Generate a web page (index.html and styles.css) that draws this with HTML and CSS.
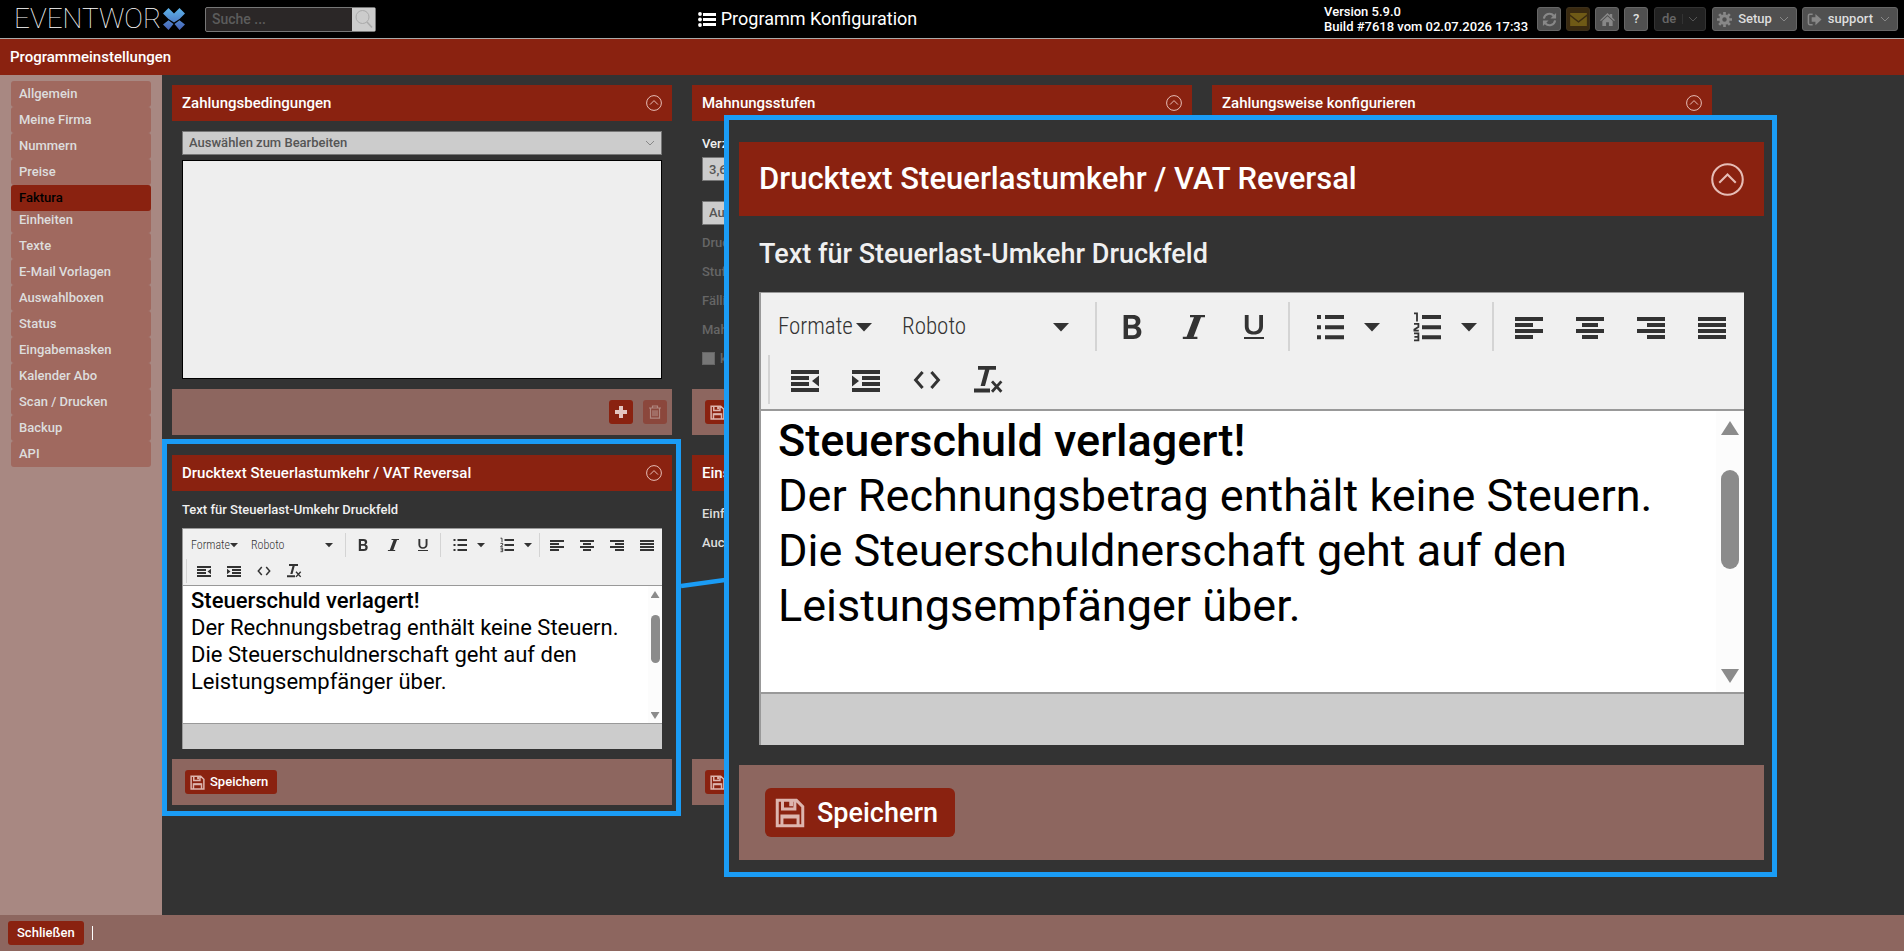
FILE: index.html
```html
<!DOCTYPE html>
<html lang="de">
<head>
<meta charset="utf-8">
<title>Programm Konfiguration</title>
<link rel="stylesheet" href="styles.css">
</head>
<body>
<svg class="sprite" aria-hidden="true">
  <defs>
    <linearGradient id="logo-fill" x1="0" y1="0" x2="0" y2="1"><stop offset="0" stop-color="#5db4ea"/><stop offset="1" stop-color="#4660b4"/></linearGradient>
  </defs>
  <symbol id="i-collapse" viewBox="0 0 16 16"><circle cx="8" cy="8" r="7.4" fill="none" stroke="currentColor" stroke-width="1"/><path d="M4 9.6 8 5.6l4 4" fill="none" stroke="currentColor" stroke-width="1"/></symbol>
  <symbol id="i-chevron" viewBox="0 0 10 10"><path d="M1 3l4 4 4-4" fill="none" stroke="currentColor"/></symbol>
  <symbol id="i-caret" viewBox="0 0 8 8"><path d="M0 2h8L4 6.300z"/></symbol>
  <symbol id="i-bold" viewBox="0 0 16 16"><path fill-rule="evenodd" d="M3.800 2h4.700c2.400 0 3.700 1.200 3.700 3.100 0 1.200-.6 2.100-1.600 2.500 1.300.4 2.100 1.400 2.100 2.800 0 2.200-1.500 3.600-4 3.600H3.800zM6 3.900v3h2.200c1.100 0 1.700-.5 1.700-1.500s-.6-1.500-1.700-1.500zM6 8.700v3.400h2.500c1.200 0 1.900-.6 1.900-1.700s-.7-1.700-1.900-1.700z"/></symbol>
  <symbol id="i-italic" viewBox="0 0 16 16"><path d="M6.500 2H14v1.100h-2L8.300 12.900h1.900V14H2.900v-1.100h1.900L8.500 3.100h-2z"/></symbol>
  <symbol id="i-underline" viewBox="0 0 16 16"><path d="M3.400 2h1.900v5.500c0 1.700.9 2.700 2.600 2.700s2.700-1 2.700-2.700V2h1.900v5.600c0 2.700-1.700 4.200-4.600 4.200S3.400 10.300 3.400 7.600zM3 13h10v1H3z"/></symbol>
  <symbol id="i-bullets" viewBox="0 0 16 16"><path d="M5.500 2H15v2H5.500zM5.500 7.100H15v2H5.500zM5.500 12.100H15v2H5.500zM1.500 2h2v2h-2zM1.500 7.100h2v2h-2zM1.500 12.100h2v2h-2z"/></symbol>
  <symbol id="i-numbers" viewBox="0 0 16 16"><path d="M5.500 2H15v2H5.500zM5.500 7.100H15v2H5.500zM5.500 12.100H15v2H5.500z"/><path d="M1.500 1.200h1.500v4M1.500 6.400h2.200v1.600L1.700 9.300v.5h2.200M1.500 11.200h2.200v3.500H1.500M1.700 12.900h2" fill="none" stroke="currentColor" stroke-width=".9"/></symbol>
  <symbol id="i-left" viewBox="0 0 16 16"><path d="M1 3h14v2H1zM1 6h9v2H1zM1 9h14v2H1zM1 12h9v2H1z"/></symbol>
  <symbol id="i-center" viewBox="0 0 16 16"><path d="M1 3h14v2H1zM4 6h8v2H4zM1 9h14v2H1zM4 12h8v2H4z"/></symbol>
  <symbol id="i-right" viewBox="0 0 16 16"><path d="M1 3h14v2H1zM6 6h9v2H6zM1 9h14v2H1zM6 12h9v2H6z"/></symbol>
  <symbol id="i-justify" viewBox="0 0 16 16"><path d="M1 3h14v2H1zM1 6h14v2H1zM1 9h14v2H1zM1 12h14v2H1z"/></symbol>
  <symbol id="i-outdent" viewBox="0 0 16 16"><path d="M1 3h14v2H1zM1 6h9v2H1zM1 9h9v2H1zM1 12h14v2H1zM15 5.800v5.400L11.500 8.500z"/></symbol>
  <symbol id="i-indent" viewBox="0 0 16 16"><path d="M1 3h14v2H1zM6 6h9v2H6zM6 9h9v2H6zM1 12h14v2H1zM1 5.800v5.400l3.500-2.700z"/></symbol>
  <symbol id="i-code" viewBox="0 0 16 16"><path d="M5.800 4 2.300 8l3.500 4M10.200 4l3.500 4-3.500 4" fill="none" stroke="currentColor" stroke-width="1.500"/></symbol>
  <symbol id="i-clear" viewBox="0 0 16 16"><path d="M3 1h9v1.900H8.700L6.500 11H4.300l2.200-8.100H3zM1 12.300h8v1.900H1z"/><path d="M10 8.700l4.700 5.200M14.700 8.700 10 13.900" fill="none" stroke="currentColor" stroke-width="1.400"/></symbol>
  <symbol id="i-save" viewBox="0 0 16 16"><path d="M1.200 1.200h10.200l3.400 3.400v10.200H1.200zM4 1.200v4.600h6.600V1.200M3.700 14.800V9.600h8.600v5.200" fill="none" stroke="currentColor" stroke-width="1.600"/><path d="M7.600 1.200h2v3.200h-2zM3.700 9h8.600v1.900H3.700z"/></symbol>
  <symbol id="i-plus" viewBox="0 0 16 16"><path d="M6 2h4v4h4v4h-4v4H6v-4H2V6h4z"/></symbol>
  <symbol id="i-trash" viewBox="0 0 16 16"><path d="M2 4h12M5.500 4V2h5v2M3.500 4v10.200h9V4M6 6.200v6M8 6.200v6M10 6.200v6" fill="none" stroke="currentColor" stroke-width="1.200"/></symbol>
  <symbol id="i-list" viewBox="0 0 18 18"><path d="M5 3h13v3H5zM5 8h13v3H5zM5 13h13v3H5z"/><circle cx="2" cy="4" r="1.900"/><circle cx="2" cy="9.500" r="1.900"/><circle cx="2" cy="15" r="1.900"/></symbol>
  <symbol id="i-search" viewBox="0 0 20 20"><circle cx="8.500" cy="8" r="6.500" fill="none" stroke="currentColor"/><path d="M13 13l5 5.500" fill="none" stroke="currentColor" stroke-width="1.500"/></symbol>
  <symbol id="i-refresh" viewBox="0 0 16 16"><path d="M2 7a6 6 0 0 1 10.500-3M14 9a6 6 0 0 1-10.500 3" fill="none" stroke="currentColor" stroke-width="2.200"/><path d="M15 1v6H9zM1 15V9h6z"/></symbol>
  <symbol id="i-mail" viewBox="0 0 18 14"><path d="M0 0h18v1.500L9 8.500 0 1.500zM0 3.500l9 7 9-7V14H0z"/></symbol>
  <symbol id="i-home" viewBox="0 0 16 16"><path d="M8 1l2.500 2.400V2H13v3.800l3 2.900-1 1L8 3.200 1 9.700l-1-1zM8 4.500l5.500 5.200V15H9.500v-4h-3v4h-4V9.700z"/></symbol>
  <symbol id="i-gear" viewBox="0 0 16 16"><circle cx="8" cy="8" r="4" fill="none" stroke="currentColor" stroke-width="3.200"/><path d="M8 0v3M8 13v3M0 8h3M13 8h3M2.300 2.300l2.200 2.200M11.500 11.500l2.200 2.200M2.300 13.700l2.200-2.200M11.500 4.500l2.200-2.200" fill="none" stroke="currentColor" stroke-width="2.800"/></symbol>
  <symbol id="i-exit" viewBox="0 0 16 16"><path d="M6 2.500H3a1.500 1.500 0 0 0-1.500 1.500v8A1.500 1.500 0 0 0 3 13.500h3" fill="none" stroke="currentColor" stroke-width="1.600"/><path d="M5 5.500h4V2l6.500 6L9 14v-3.500H5z"/></symbol>
</svg>

<header class="topbar">
  <a class="logo" href="#" aria-label="EVENTWORX">EVENTWOR<svg class="logo-x" viewBox="0 0 22 22" aria-hidden="true"><path fill="url(#logo-fill)" d="M5.500 0 11 5.500 16.500 0 22 5.500 16.500 11 11 14.500 5.500 11 0 5.500zM5.500 12.200l5 3.800-5 6L0 16.500zM16.500 12.200l5.500 4.300-5.500 5.500-5-6z"/></svg></a>
  <form class="search">
    <input type="text" placeholder="Suche ..." aria-label="Suche">
    <button type="button" aria-label="Suchen"><svg><use href="#i-search"/></svg></button>
  </form>
  <h1 class="page-title"><svg><use href="#i-list"/></svg>Programm Konfiguration</h1>
  <p class="version">Version 5.9.0<br>Build #7618 vom 02.07.2026 17:33</p>
  <nav class="tools">
    <button class="tool" aria-label="Aktualisieren"><svg><use href="#i-refresh"/></svg></button>
    <button class="tool tool-mail" aria-label="Nachrichten"><svg><use href="#i-mail"/></svg></button>
    <button class="tool" aria-label="Startseite"><svg><use href="#i-home"/></svg></button>
    <button class="tool">?</button>
    <button class="tool tool-lang">de<svg class="chev"><use href="#i-chevron"/></svg></button>
    <button class="tool tool-wide"><svg><use href="#i-gear"/></svg>Setup<svg class="chev"><use href="#i-chevron"/></svg></button>
    <button class="tool tool-wide"><svg><use href="#i-exit"/></svg>support<svg class="chev"><use href="#i-chevron"/></svg></button>
  </nav>
</header>
<h2 class="section-bar">Programmeinstellungen</h2>

<div class="workspace">
  <nav class="sidebar">
    <a href="#">Allgemein</a>
    <a href="#">Meine Firma</a>
    <a href="#">Nummern</a>
    <a href="#">Preise</a>
    <a href="#" class="active">Faktura</a>
    <a href="#">Einheiten</a>
    <a href="#">Texte</a>
    <a href="#">E-Mail Vorlagen</a>
    <a href="#">Auswahlboxen</a>
    <a href="#">Status</a>
    <a href="#">Eingabemasken</a>
    <a href="#">Kalender Abo</a>
    <a href="#">Scan / Drucken</a>
    <a href="#">Backup</a>
    <a href="#">API</a>
  </nav>

  <main class="panels">
    <section class="panel">
      <h3 class="panel-head">Zahlungsbedingungen<svg><use href="#i-collapse"/></svg></h3>
      <div class="panel-body">
        <div class="select"><select aria-label="Zahlungsbedingung"><option>Auswählen zum Bearbeiten</option></select><svg><use href="#i-chevron"/></svg></div>
        <textarea class="blank" aria-label="Zahlungsbedingung Text"></textarea>
      </div>
      <div class="panel-foot foot-end">
        <button class="btn btn-icon" aria-label="Hinzufügen"><svg><use href="#i-plus"/></svg></button>
        <button class="btn btn-icon" disabled aria-label="Löschen"><svg><use href="#i-trash"/></svg></button>
      </div>
    </section>

    <section class="panel">
      <h3 class="panel-head">Mahnungsstufen<svg><use href="#i-collapse"/></svg></h3>
      <div class="panel-body">
        <label class="label field-label" for="rate">Verzug</label>
        <input class="field" id="rate" type="text" value="3,6">
        <div class="select level"><select aria-label="Mahnstufe"><option>Auswahl</option></select><svg><use href="#i-chevron"/></svg></div>
        <p class="hint">Druck</p>
        <p class="hint">Stufe</p>
        <p class="hint">Fällig</p>
        <p class="hint">Mahn</p>
        <label class="hint check"><input type="checkbox" disabled>kein</label>
      </div>
      <div class="panel-foot"><button class="btn" aria-label="Speichern"><svg><use href="#i-save"/></svg></button></div>
    </section>

    <section class="panel">
      <h3 class="panel-head">Zahlungsweise konfigurieren<svg><use href="#i-collapse"/></svg></h3>
    </section>

    <section class="panel">
      <h3 class="panel-head">Drucktext Steuerlastumkehr / VAT Reversal<svg><use href="#i-collapse"/></svg></h3>
      <div class="panel-body">
        <p class="label">Text für Steuerlast-Umkehr Druckfeld</p>
        <div class="editor">
          <div class="toolbar">
            <div class="tb-row">
              <button class="tb-format">Formate<svg><use href="#i-caret"/></svg></button>
              <div class="tb-font"><select aria-label="Schriftart"><option>Roboto</option></select><svg><use href="#i-caret"/></svg></div>
              <i class="tb-sep"></i>
              <button class="tb" aria-label="Fett"><svg><use href="#i-bold"/></svg></button>
              <button class="tb" aria-label="Kursiv"><svg><use href="#i-italic"/></svg></button>
              <button class="tb" aria-label="Unterstrichen"><svg><use href="#i-underline"/></svg></button>
              <i class="tb-sep"></i>
              <button class="tb-split" aria-label="Aufzählung"><svg><use href="#i-bullets"/></svg><svg class="caret"><use href="#i-caret"/></svg></button>
              <button class="tb-split" aria-label="Nummerierung"><svg><use href="#i-numbers"/></svg><svg class="caret"><use href="#i-caret"/></svg></button>
              <i class="tb-sep"></i>
              <button class="tb" aria-label="Linksbündig"><svg><use href="#i-left"/></svg></button>
              <button class="tb" aria-label="Zentriert"><svg><use href="#i-center"/></svg></button>
              <button class="tb" aria-label="Rechtsbündig"><svg><use href="#i-right"/></svg></button>
              <button class="tb" aria-label="Blocksatz"><svg><use href="#i-justify"/></svg></button>
            </div>
            <div class="tb-row">
              <i class="tb-sep"></i>
              <button class="tb" aria-label="Einzug verkleinern"><svg><use href="#i-outdent"/></svg></button>
              <button class="tb" aria-label="Einzug vergrößern"><svg><use href="#i-indent"/></svg></button>
              <button class="tb" aria-label="Quelltext"><svg><use href="#i-code"/></svg></button>
              <button class="tb" aria-label="Formatierung entfernen"><svg><use href="#i-clear"/></svg></button>
            </div>
          </div>
          <div class="editor-page">
            <div class="editor-text"><strong>Steuerschuld verlagert!</strong><br>Der Rechnungsbetrag enthält keine Steuern.<br>Die Steuerschuldnerschaft geht auf den Leistungsempfänger über.</div>
            <div class="scroll"><i class="up"></i><i class="thumb"></i><i class="down"></i></div>
          </div>
          <div class="status"></div>
        </div>
      </div>
      <div class="panel-foot"><button class="btn"><svg><use href="#i-save"/></svg>Speichern</button></div>
    </section>

    <section class="panel">
      <h3 class="panel-head">Einst<svg><use href="#i-collapse"/></svg></h3>
      <div class="panel-body options">
        <p>Einfach</p>
        <p>Auch</p>
      </div>
      <div class="panel-foot"><button class="btn" aria-label="Speichern"><svg><use href="#i-save"/></svg></button></div>
    </section>
  </main>

  <div class="marker"></div>
  <svg class="connector" viewBox="0 0 44 14" aria-hidden="true"><path d="M0 10 44 4" stroke="#1a9cf5" stroke-width="4.500"/></svg>

  <section class="lens">
    <h3 class="panel-head">Drucktext Steuerlastumkehr / VAT Reversal<svg><use href="#i-collapse"/></svg></h3>
    <div class="panel-body">
      <p class="label">Text für Steuerlast-Umkehr Druckfeld</p>
      <div class="editor">
        <div class="toolbar">
          <div class="tb-row">
            <button class="tb-format">Formate<svg><use href="#i-caret"/></svg></button>
            <div class="tb-font"><select aria-label="Schriftart"><option>Roboto</option></select><svg><use href="#i-caret"/></svg></div>
            <i class="tb-sep"></i>
            <button class="tb" aria-label="Fett"><svg><use href="#i-bold"/></svg></button>
            <button class="tb" aria-label="Kursiv"><svg><use href="#i-italic"/></svg></button>
            <button class="tb" aria-label="Unterstrichen"><svg><use href="#i-underline"/></svg></button>
            <i class="tb-sep"></i>
            <button class="tb-split" aria-label="Aufzählung"><svg><use href="#i-bullets"/></svg><svg class="caret"><use href="#i-caret"/></svg></button>
            <button class="tb-split" aria-label="Nummerierung"><svg><use href="#i-numbers"/></svg><svg class="caret"><use href="#i-caret"/></svg></button>
            <i class="tb-sep"></i>
            <button class="tb" aria-label="Linksbündig"><svg><use href="#i-left"/></svg></button>
            <button class="tb" aria-label="Zentriert"><svg><use href="#i-center"/></svg></button>
            <button class="tb" aria-label="Rechtsbündig"><svg><use href="#i-right"/></svg></button>
            <button class="tb" aria-label="Blocksatz"><svg><use href="#i-justify"/></svg></button>
          </div>
          <div class="tb-row">
            <i class="tb-sep"></i>
            <button class="tb" aria-label="Einzug verkleinern"><svg><use href="#i-outdent"/></svg></button>
            <button class="tb" aria-label="Einzug vergrößern"><svg><use href="#i-indent"/></svg></button>
            <button class="tb" aria-label="Quelltext"><svg><use href="#i-code"/></svg></button>
            <button class="tb" aria-label="Formatierung entfernen"><svg><use href="#i-clear"/></svg></button>
          </div>
        </div>
        <div class="editor-page">
          <div class="editor-text"><strong>Steuerschuld verlagert!</strong><br>Der Rechnungsbetrag enthält keine Steuern.<br>Die Steuerschuldnerschaft geht auf den Leistungsempfänger über.</div>
          <div class="scroll"><i class="up"></i><i class="thumb"></i><i class="down"></i></div>
        </div>
        <div class="status"></div>
      </div>
    </div>
    <div class="panel-foot"><button class="btn"><svg><use href="#i-save"/></svg>Speichern</button></div>
  </section>
</div>

<footer class="bottombar"><button class="btn">Schließen</button><i class="bar"></i></footer>
</body>
</html>
```
FILE: styles.css
```css
* { box-sizing: border-box; }

body {
  margin: 0;
  min-height: 100vh;
  display: flex;
  flex-direction: column;
  background: #333;
  color: #fff;
  font: 500 13px/16px Roboto, "Liberation Sans", sans-serif;
}

h1, h2, h3, p { margin: 0; font: inherit; }
svg { display: block; fill: currentColor; flex: none; }
.sprite { position: absolute; width: 0; height: 0; }
button, input, select, textarea { font: inherit; color: inherit; margin: 0; }
button { border: 0; padding: 0; background: none; display: flex; align-items: center; justify-content: center; }
select { appearance: none; border: 0; border-radius: 0; outline: 0; background: none; }

/* top bar */
.topbar {
  height: 39px;
  background: #000;
  border-bottom: 1px solid #aaa;
  display: flex;
  align-items: center;
  padding: 0 6px 0 14px;
}
.logo { display: flex; align-items: center; gap: 2px; width: 191px; color: #fff; text-decoration: none; font-size: 28px; font-weight: 100; }
.logo-x { width: 22px; height: 22px; }
.search { display: flex; width: 171px; height: 25px; border: 1px solid #777; border-radius: 2px; background: #2b2727; }
.search input { flex: 1; min-width: 0; border: 0; background: none; padding: 0 6px; font-size: 14px; }
.search input::placeholder { color: #5c5c5c; }
.search button { width: 23px; background: #ccc; color: #aaa; }
.search button svg { width: 20px; height: 20px; }
.page-title { flex: 1; display: flex; align-items: center; justify-content: center; gap: 5px; padding-right: 85px; font-size: 18px; font-weight: 400; line-height: 22px; }
.page-title svg { width: 18px; height: 18px; }
.version { line-height: 15px; margin-right: 9px; }
.tools { display: flex; gap: 5px; }
.tool { height: 24px; min-width: 24px; border: 1px solid #666; border-radius: 3px; background: #505050; color: #ddd; gap: 6px; }
.tool svg { width: 15px; height: 15px; color: #888; }
.tool .chev { width: 10px; height: 10px; }
.tool-mail { background: #3a2a10; border-color: #3c301c; }
.tool-mail svg { color: #6f5a16; height: 13px; width: 17px; }
.tool-lang { width: 52px; margin-left: 1px; background: #222; border-color: #333; color: #666; }
.tool-lang .chev { box-sizing: content-box; padding-left: 5px; border-left: 1px solid #333; color: #555; }
.tool-wide { padding: 0 7px 0 4px; gap: 6px; }
.tool-wide .chev { margin-left: 1px; }
.tool-lang + .tool-wide { margin-left: 1px; }

.section-bar { height: 36px; padding: 0 10px; background: #8a2210; font-size: 15px; line-height: 36px; }

/* work area */
.workspace { flex: 1; display: flex; position: relative; }
.sidebar { width: 162px; padding: 6px 11px; background: #a88882; }
.sidebar a { display: block; height: 26px; padding: 0 8px; border-radius: 3px; background: #a0695f; color: #ddd; line-height: 26px; text-decoration: none; }
.sidebar .active { position: relative; margin-bottom: -4px; background: #8a2210; color: #000; }

.panels { flex: 1; display: grid; grid-template-columns: repeat(3, 500px); gap: 20px; align-content: start; padding: 10px; }
.panel { display: flex; flex-direction: column; }
.panel-head { display: flex; align-items: center; justify-content: space-between; height: 36px; padding: 0 10px; background: #8a2210; font-size: 15px; }
.panel-head svg { width: 16px; height: 16px; color: #e6bdb6; }
.panel-body { flex: 1; padding: 10px; }
.panel-foot { display: flex; align-items: center; gap: 10px; height: 46px; padding: 0 13px; background: #8d665f; }
.foot-end { justify-content: flex-end; padding: 0 5px; }

.btn { height: 24px; padding: 0 9px 0 5px; gap: 5px; border-radius: 3px; background: #8a2210; color: #fff; }
.btn svg { width: 15px; height: 15px; color: #ddb5ae; }
.btn-icon { width: 24px; padding: 0; }
.btn-icon svg { width: 16px; height: 16px; color: #e3c5c0; }
.btn:disabled { background: #8b473c; }
.btn:disabled svg { color: #b08880; }

.select { display: grid; align-items: center; height: 24px; border: 1px solid #777; background: #ccc; color: #555; }
.select > * { grid-area: 1 / 1; }
.select select { width: 100%; padding: 0 6px; }
.select svg { width: 10px; height: 10px; justify-self: end; margin-right: 6px; color: #888; }
.blank { display: block; width: 100%; height: 219px; margin-top: 5px; border: 1px solid #000; background: #eee; resize: none; }
.label { display: block; color: #f0f0f0; line-height: 18px; }
.field-label { padding: 4px 0; }
.field { display: block; width: 100%; height: 24px; border: 1px solid #777; background: #ccc; color: #555; padding: 0 6px; }
.level { margin: 20px 0 3px; }
.hint { color: #666; line-height: 29px; }
.check { display: flex; align-items: center; gap: 5px; }
.check input { appearance: none; width: 13px; height: 13px; background: #777; border: 1px solid #666; }
.options { padding-top: 8px; color: #ddd; line-height: 29px; }

/* rich text editor */
.editor { margin-top: 9px; border: solid #999; border-width: 1px 0 0 1px; background: #fff; }
.toolbar { display: flex; flex-direction: column; gap: 2px; padding: 4px 0 2px; background: #f0f0f0; border-bottom: 1px solid #999; color: #333; }
.tb-row { display: flex; height: 24px; }
.tb { width: 30px; }
.tb svg, .tb-split svg { width: 16px; height: 16px; }
.tb-sep { width: 1px; margin: 0 2px; background: #d4d4d4; }
.tb-sep:first-child { margin-left: 3px; }
.tb-format, .tb-font { font: 300 12px/24px "Roboto Condensed", "Liberation Sans Narrow", Roboto, sans-serif; color: #333; }
.tb-format { width: 58px; padding: 0 4px 0 8px; justify-content: space-between; }
.tb-font { display: grid; align-items: center; width: 102px; padding: 0 10px; }
.tb-font > * { grid-area: 1 / 1; }
.tb-font select { width: 100%; padding: 0; }
.tb-font svg { justify-self: end; }
.tb-format svg, .tb-font svg, .tb-split .caret { width: 8px; height: 8px; color: #333; }
.tb-split { width: 47px; justify-content: flex-start; padding-left: 9px; gap: 9px; }
.editor-page { display: flex; height: 138px; border-bottom: 1px solid #999; color: #000; overflow: hidden; }
.editor-text { flex: 1; padding: 1px 8px; font-size: 22px; line-height: 27px; font-weight: 400; }
.editor-text strong { font-weight: 500; }
.scroll { width: 14px; display: flex; flex-direction: column; align-items: center; padding: 5px 0 4px; background: #fcfcfc; }
.thumb { width: 9px; height: 48px; margin: 17px 0 auto; border-radius: 5px; background: #8b8b8b; }
.up, .down { width: 9px; height: 7px; background: #8b8b8b; }
.up { clip-path: polygon(50% 0, 100% 100%, 0 100%); }
.down { clip-path: polygon(0 0, 100% 0, 50% 100%); }
.status { height: 25px; background: #ccc; }

/* highlight frame, connector and enlarged view */
.marker { position: absolute; left: 162px; top: 364px; width: 519px; height: 377px; border: 5px solid #1a9cf5; }
.connector { position: absolute; left: 681px; top: 501px; width: 44px; height: 14px; }
.lens { position: absolute; left: 724px; top: 40px; width: 1053px; padding: 22px 8px 12px 10px; border: 5px solid #1a9cf5; background: #333; }
.lens .panel-head { height: 74px; padding: 0 20px; font-size: 31px; line-height: 36px; }
.lens .panel-head svg { width: 33px; height: 33px; }
.lens .panel-body { padding: 20px; }
.lens .label { font-size: 27px; line-height: 36px; }
.lens .panel-foot { height: 95px; padding: 0 26px; }
.lens .btn { height: 49px; padding: 0 17px 0 10px; gap: 12px; border-radius: 6px; font-size: 27px; line-height: 32px; }
.lens .btn svg { width: 30px; height: 30px; }
.lens .editor { margin-top: 20px; border-width: 1px 0 0 2px; }
.lens .toolbar { gap: 4px; padding: 9px 0 5px; border-bottom-width: 2px; }
.lens .tb-row { height: 49px; }
.lens .tb { width: 61px; }
.lens .tb svg, .lens .tb-split svg { width: 32px; height: 32px; }
.lens .tb-sep { width: 2px; margin: 0 4px; }
.lens .tb-sep:first-child { margin-left: 7px; }
.lens .tb-format, .lens .tb-font { font-size: 23px; line-height: 48px; }
.lens .tb-format { width: 119px; padding: 0 8px 0 17px; }
.lens .tb-font { width: 211px; padding: 0 22px; }
.lens .tb-format svg, .lens .tb-font svg, .lens .tb-split .caret { width: 16px; height: 16px; }
.lens .tb-split { width: 97px; padding-left: 20px; gap: 18px; }
.lens .editor-page { height: 283px; border-bottom-width: 2px; }
.lens .editor-text { padding: 2px 17px; font-size: 45px; line-height: 55px; }
.lens .scroll { width: 28px; padding: 10px 0 9px; }
.lens .up, .lens .down { width: 18px; height: 14px; }
.lens .thumb { width: 18px; height: 99px; margin-top: 35px; border-radius: 9px; }
.lens .status { height: 51px; }

.bottombar { display: flex; align-items: center; gap: 8px; height: 36px; padding: 0 8px; background: #8d665f; }
.bottombar .btn { padding: 0 9px; }
.bar { width: 1px; height: 14px; background: #fff; }
```
